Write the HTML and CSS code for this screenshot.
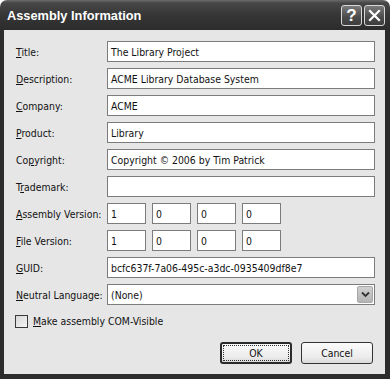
FILE: index.html
```html
<!DOCTYPE html>
<html lang="en">
  <head>
    <meta charset="UTF-8" />
    <title>Assembly Information</title>
    <link rel="stylesheet" href="styles.css">
  </head>
  <body>
    <div class="window">
      <div class="titlebar">
        <span class="title">Assembly Information</span>
        <div class="caption-buttons">
          <span class="cap-btn">?</span>
          <span class="cap-btn">
            <svg width="13" height="13" viewBox="0 0 13 13"><path d="M2 2 L11 11 M11 2 L2 11" stroke="#fff" stroke-width="2.2" stroke-linecap="square" /></svg>
          </span>
        </div>
      </div>

      <div class="client">
        <div class="row">
          <label><u>T</u>itle:</label>
          <div class="field">The Library Project</div>
        </div>
        <div class="row">
          <label><u>D</u>escription:</label>
          <div class="field">ACME Library Database System</div>
        </div>
        <div class="row">
          <label><u>C</u>ompany:</label>
          <div class="field">ACME</div>
        </div>
        <div class="row">
          <label><u>P</u>roduct:</label>
          <div class="field">Library</div>
        </div>
        <div class="row">
          <label>Co<u>p</u>yright:</label>
          <div class="field">Copyright © 2006 by Tim Patrick</div>
        </div>
        <div class="row">
          <label>T<u>r</u>ademark:</label>
          <div class="field"></div>
        </div>
        <div class="row">
          <label><u>A</u>ssembly Version:</label>
          <div class="versions">
            <div class="field small">1</div>
            <div class="field small">0</div>
            <div class="field small">0</div>
            <div class="field small">0</div>
          </div>
        </div>
        <div class="row">
          <label><u>F</u>ile Version:</label>
          <div class="versions">
            <div class="field small">1</div>
            <div class="field small">0</div>
            <div class="field small">0</div>
            <div class="field small">0</div>
          </div>
        </div>
        <div class="row">
          <label><u>G</u>UID:</label>
          <div class="field">bcfc637f-7a06-495c-a3dc-0935409df8e7</div>
        </div>
        <div class="row">
          <label><u>N</u>eutral Language:</label>
          <div class="field combo">
            <span>(None)</span>
            <span class="combo-btn">
              <svg width="9" height="7" viewBox="0 0 9 7"><path d="M1 1.5 L4.5 5 L8 1.5" fill="none" stroke="#333" stroke-width="1.8" /></svg>
            </span>
          </div>
        </div>

        <div class="check-row">
          <span class="checkbox"></span>
          <span><u>M</u>ake assembly COM-Visible</span>
        </div>

        <div class="buttons">
          <div class="btn default"><span class="focus">OK</span></div>
          <div class="btn">Cancel</div>
        </div>
      </div>
    </div>
  </body>
</html>
```

FILE: styles.css
```css
body {
  margin: 0;
  background: #ffffff;
  font-family: "DejaVu Sans Condensed", "DejaVu Sans", sans-serif;
  font-size: 10.4px;
  color: #111111;
}

.window {
  width: 390px;
  height: 379px;
  display: flex;
  flex-direction: column;
}

.titlebar {
  height: 30px;
  border-radius: 7px 7px 0 0;
  background: linear-gradient(#6a6a6a 0, #474747 3px, #363636 50%, #2c2c2c 100%);
  display: flex;
  align-items: center;
  justify-content: space-between;
  padding: 0 5px 0 7px;
  box-sizing: border-box;
}

.title {
  color: #ffffff;
  font-family: "Liberation Sans", Arial, sans-serif;
  font-weight: bold;
  font-size: 12.8px;
  padding-top: 1px;
}

.caption-buttons {
  display: flex;
  gap: 2px;
  padding-top: 1px;
}

.cap-btn {
  width: 21px;
  height: 21px;
  box-sizing: border-box;
  border: 1px solid #d8d8d8;
  border-radius: 3px;
  background: linear-gradient(#7a7a7a, #4a4a4a 60%, #3e3e3e);
  color: #ffffff;
  font-family: "Liberation Sans", Arial, sans-serif;
  font-weight: bold;
  font-size: 17px;
  display: flex;
  align-items: center;
  justify-content: center;
}

.client {
  flex: 1;
  background: #e6e6e6;
  border-left: 4px solid #2c2c2c;
  border-right: 5px solid #2c2c2c;
  border-bottom: 5px solid #2c2c2c;
  padding: 11px 10px 10px 12px;
  display: flex;
  flex-direction: column;
  gap: 6px;
}

.row {
  display: flex;
  align-items: center;
  height: 21px;
}

.row label {
  width: 91px;
  flex: none;
  white-space: nowrap;
}

.field {
  flex: 1;
  height: 21px;
  box-sizing: border-box;
  border: 1px solid #7c7c7c;
  background: #ffffff;
  padding: 0 3px;
  display: flex;
  align-items: center;
  white-space: nowrap;
}

.versions {
  display: flex;
  gap: 6px;
}

.field.small {
  flex: none;
  width: 39px;
}

.combo {
  justify-content: space-between;
  padding-right: 1px;
}

.combo-btn {
  width: 16px;
  height: 17px;
  background: linear-gradient(#d0d0d0, #b4b4b4);
  border: 1px solid #a8a8a8;
  box-sizing: border-box;
  border-radius: 2px;
  display: flex;
  align-items: center;
  justify-content: center;
}

.check-row {
  display: flex;
  align-items: center;
  gap: 5px;
  margin-top: 3px;
  margin-left: -1px;
  height: 14px;
  white-space: nowrap;
}

.checkbox {
  width: 13px;
  height: 13px;
  box-sizing: border-box;
  border: 1px solid #3a3a3a;
  background: linear-gradient(135deg, #d6d6d6, #f6f6f6);
}

.buttons {
  margin-top: auto;
  display: flex;
  justify-content: flex-end;
  gap: 9px;
  margin-right: 2px;
}

.btn {
  width: 72px;
  height: 22px;
  box-sizing: border-box;
  border: 1px solid #333333;
  border-radius: 3px;
  background: linear-gradient(#fbfbfb, #ececec 70%, #dadada);
  display: flex;
  align-items: center;
  justify-content: center;
}

.btn.default {
  border: 2px solid #2a2a2a;
  padding: 1px;
}

.focus {
  flex: 1;
  align-self: stretch;
  border: 1px dotted #333333;
  display: flex;
  align-items: center;
  justify-content: center;
}
```
